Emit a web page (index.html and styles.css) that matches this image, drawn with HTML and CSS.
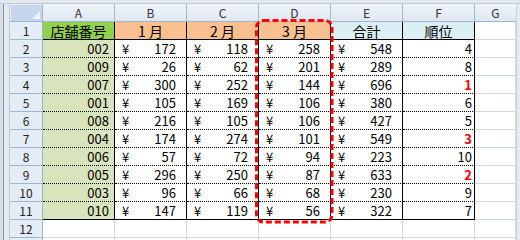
FILE: index.html
```html
<!DOCTYPE html>
<html lang="ja">
<head>
<meta charset="utf-8">
<link rel="stylesheet" href="styles.css">
</head>
<body>
<div class="window">
  <div class="topframe"></div>
  <div class="main">
    <div class="lf"></div>
    <div class="sheet">
      <div class="corner"><svg width="8" height="8" viewBox="0 0 8 8"><path d="M8 0 L8 8 L0 8 Z" fill="#eef3f9"/></svg></div>
      <div class="ch">A</div><div class="ch">B</div><div class="ch">C</div><div class="ch">D</div><div class="ch">E</div><div class="ch">F</div><div class="ch last">G</div>

      <div class="rh">1</div>
      <div class="t top head green-h">店舗番号</div>
      <div class="t top head orange">1 月</div>
      <div class="t top head orange">2 月</div>
      <div class="t top head orange">3 月</div>
      <div class="t top head blue">合計</div>
      <div class="t top head blue">順位</div>
      <div class="c"></div>

      <div class="rh">2</div>
      <div class="t id">002</div>
      <div class="t acc"><span>¥</span><span>172</span></div>
      <div class="t acc"><span>¥</span><span>118</span></div>
      <div class="t acc"><span>¥</span><span>258</span></div>
      <div class="t acc"><span>¥</span><span>548</span></div>
      <div class="t rank">4</div>
      <div class="c"></div>

      <div class="rh">3</div>
      <div class="t id">009</div>
      <div class="t acc"><span>¥</span><span>26</span></div>
      <div class="t acc"><span>¥</span><span>62</span></div>
      <div class="t acc"><span>¥</span><span>201</span></div>
      <div class="t acc"><span>¥</span><span>289</span></div>
      <div class="t rank">8</div>
      <div class="c"></div>

      <div class="rh">4</div>
      <div class="t id">007</div>
      <div class="t acc"><span>¥</span><span>300</span></div>
      <div class="t acc"><span>¥</span><span>252</span></div>
      <div class="t acc"><span>¥</span><span>144</span></div>
      <div class="t acc"><span>¥</span><span>696</span></div>
      <div class="t rank top3">1</div>
      <div class="c"></div>

      <div class="rh">5</div>
      <div class="t id">001</div>
      <div class="t acc"><span>¥</span><span>105</span></div>
      <div class="t acc"><span>¥</span><span>169</span></div>
      <div class="t acc"><span>¥</span><span>106</span></div>
      <div class="t acc"><span>¥</span><span>380</span></div>
      <div class="t rank">6</div>
      <div class="c"></div>

      <div class="rh">6</div>
      <div class="t id">008</div>
      <div class="t acc"><span>¥</span><span>216</span></div>
      <div class="t acc"><span>¥</span><span>105</span></div>
      <div class="t acc"><span>¥</span><span>106</span></div>
      <div class="t acc"><span>¥</span><span>427</span></div>
      <div class="t rank">5</div>
      <div class="c"></div>

      <div class="rh">7</div>
      <div class="t id">004</div>
      <div class="t acc"><span>¥</span><span>174</span></div>
      <div class="t acc"><span>¥</span><span>274</span></div>
      <div class="t acc"><span>¥</span><span>101</span></div>
      <div class="t acc"><span>¥</span><span>549</span></div>
      <div class="t rank top3">3</div>
      <div class="c"></div>

      <div class="rh">8</div>
      <div class="t id">006</div>
      <div class="t acc"><span>¥</span><span>57</span></div>
      <div class="t acc"><span>¥</span><span>72</span></div>
      <div class="t acc"><span>¥</span><span>94</span></div>
      <div class="t acc"><span>¥</span><span>223</span></div>
      <div class="t rank">10</div>
      <div class="c"></div>

      <div class="rh">9</div>
      <div class="t id">005</div>
      <div class="t acc"><span>¥</span><span>296</span></div>
      <div class="t acc"><span>¥</span><span>250</span></div>
      <div class="t acc"><span>¥</span><span>87</span></div>
      <div class="t acc"><span>¥</span><span>633</span></div>
      <div class="t rank top3">2</div>
      <div class="c"></div>

      <div class="rh">10</div>
      <div class="t id">003</div>
      <div class="t acc"><span>¥</span><span>96</span></div>
      <div class="t acc"><span>¥</span><span>66</span></div>
      <div class="t acc"><span>¥</span><span>68</span></div>
      <div class="t acc"><span>¥</span><span>230</span></div>
      <div class="t rank">9</div>
      <div class="c"></div>

      <div class="rh">11</div>
      <div class="t id bottom">010</div>
      <div class="t acc bottom"><span>¥</span><span>147</span></div>
      <div class="t acc bottom"><span>¥</span><span>119</span></div>
      <div class="t acc bottom"><span>¥</span><span>56</span></div>
      <div class="t acc bottom"><span>¥</span><span>322</span></div>
      <div class="t rank bottom">7</div>
      <div class="c"></div>

      <div class="rh">12</div>
      <div class="c"></div><div class="c"></div><div class="c"></div><div class="c"></div><div class="c"></div><div class="c"></div><div class="c"></div>

      <div class="rh"></div>
      <div class="c"></div><div class="c"></div><div class="c"></div><div class="c"></div><div class="c"></div><div class="c"></div><div class="c"></div>
    </div>
    <div class="rf"></div>
  </div>
  <svg class="mark" width="520" height="240" viewBox="0 0 520 240">
    <rect x="256.5" y="20.5" width="75.5" height="201.5" rx="7" ry="7" fill="none" stroke="#ff0000" stroke-width="3" stroke-dasharray="6 3"/>
  </svg>
</div>
</body>
</html>
```

FILE: styles.css
```css
html, body {
  margin: 0;
  padding: 0;
  background: #ffffff;
}

.window {
  position: relative;
  width: 520px;
  height: 240px;
  overflow: hidden;
  font-family: "Noto Sans CJK JP", "Noto Sans", sans-serif;
  color: #000;
}

.topframe {
  height: 4px;
  box-sizing: border-box;
  background: #e3e8ee;
  border-bottom: 1px solid #c2ccd8;
}

.main {
  display: flex;
  height: 236px;
}

.lf {
  width: 10px;
  flex: none;
  background: linear-gradient(to right, #d9dfe6 0 3px, #8693a3 3px 4px, #e6ebf1 4px 9px, #b9c6d6 9px 10px);
}

.rf {
  width: 4px;
  flex: none;
  background: linear-gradient(to right, #c9d2dd 0 1px, #e6ebf1 1px);
}

.sheet {
  flex: 1;
  display: grid;
  grid-template-columns: 33px repeat(6, 72px) 1fr;
  grid-auto-rows: 18px;
  align-content: start;
}

.sheet > div {
  box-sizing: border-box;
  border-right: 1px solid #d0d7e5;
  border-bottom: 1px solid #d0d7e5;
  line-height: 17px;
  white-space: nowrap;
  overflow: hidden;
}

.sheet > .corner {
  background: #c5d5ea;
  border-right: 1px solid #9eb6ce;
  border-bottom: 1px solid #9eb6ce;
  box-shadow: inset 1px 1px 0 #e8eef6;
  display: flex;
  align-items: flex-end;
  justify-content: flex-end;
  padding: 0 2px 2px 0;
}

.corner svg {
  display: block;
}

.sheet > .ch {
  background: linear-gradient(#f1f5fa, #dfe7f2);
  border-right: 1px solid #9eb6ce;
  border-bottom: 1px solid #9eb6ce;
  text-align: center;
  font-size: 12px;
  color: #333;
}

.sheet > .ch.last {
  border-right: none;
}

.sheet > .rh {
  background: #e4ecf7;
  border-right: 1px solid #9eb6ce;
  border-bottom: 1px solid #9eb6ce;
  text-align: center;
  font-size: 12px;
  color: #222;
}

.sheet > .t {
  border-right: 1px solid #000;
  border-bottom: 1px dotted #000;
  font-size: 13px;
}

.sheet > .t.top,
.sheet > .t.bottom {
  border-bottom: 1px solid #000;
}

.head {
  text-align: center;
  font-size: 14px !important;
  padding-top: 1px;
}

.green-h {
  background: #92d050;
}

.orange {
  background: #fac090;
}

.blue {
  background: #daeef3;
}

.id {
  background: #d8e4bc;
  text-align: right;
  padding-right: 5px;
}

.acc {
  display: flex;
  justify-content: space-between;
  padding-left: 7px;
  padding-right: 10px;
}

.rank {
  text-align: right;
  padding-right: 2px;
}

.top3 {
  color: #ff0000;
  font-weight: bold;
}

.mark {
  position: absolute;
  left: 0;
  top: 0;
  pointer-events: none;
}
```
